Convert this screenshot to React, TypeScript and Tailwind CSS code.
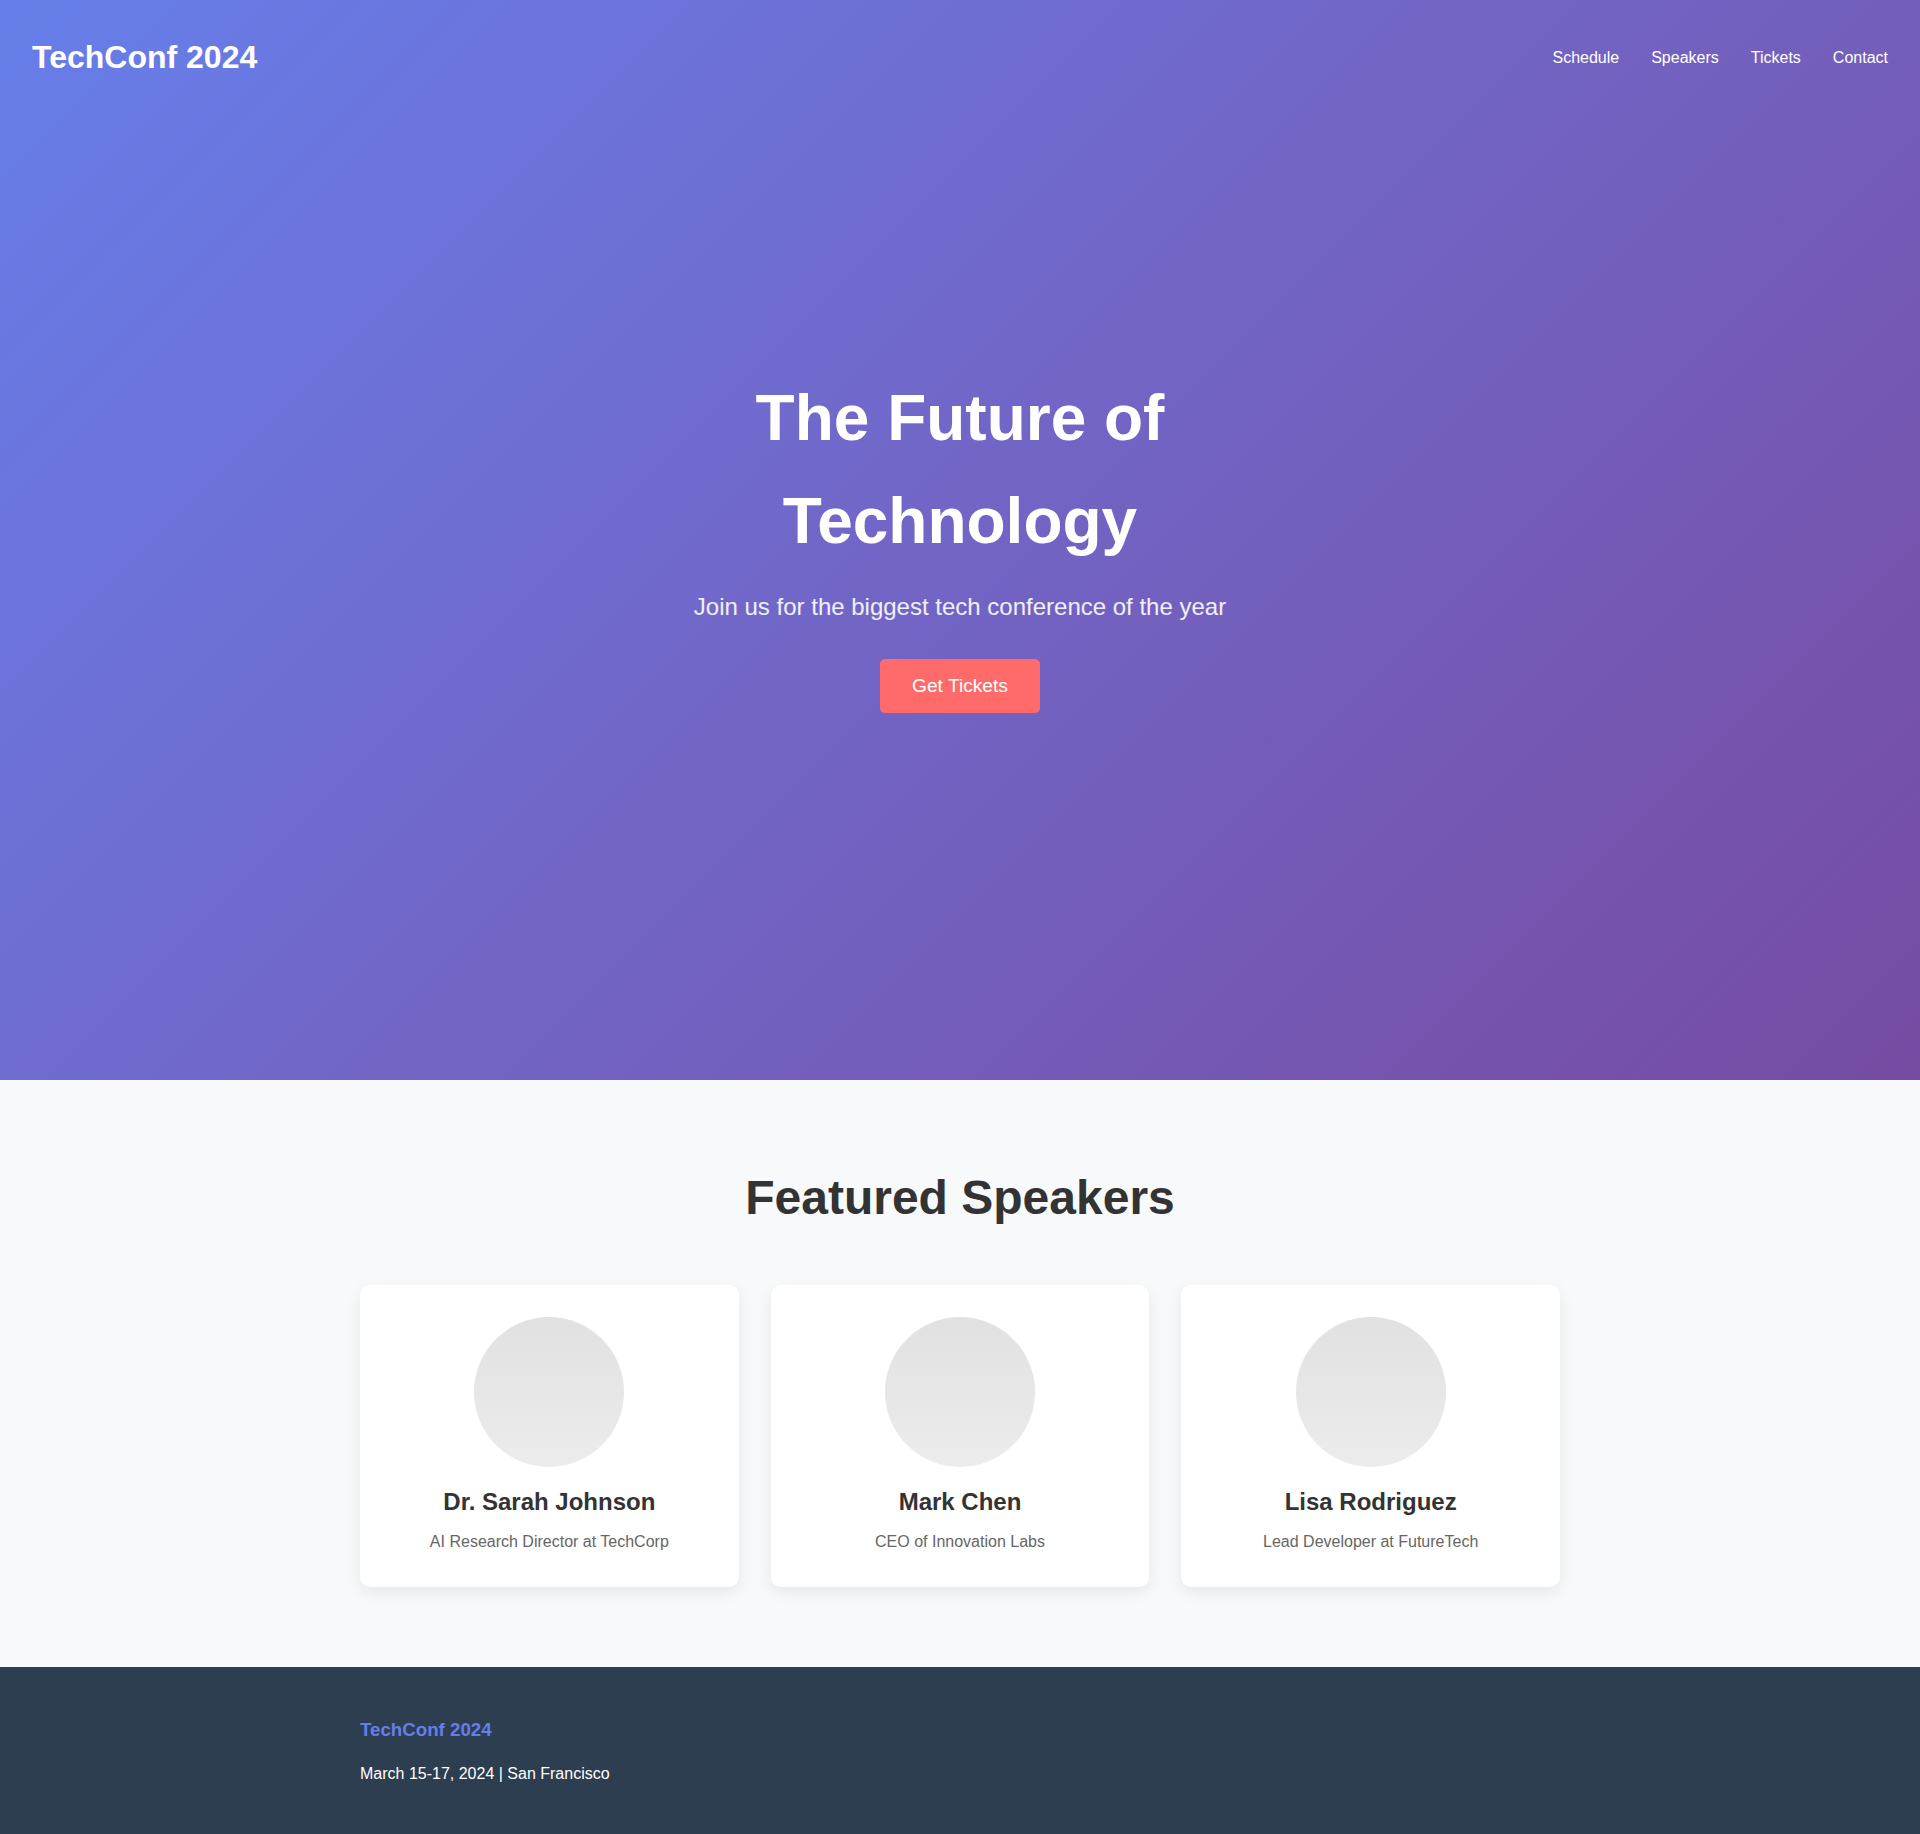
const speakers = [
  { name: 'Dr. Sarah Johnson', role: 'AI Research Director at TechCorp' },
  { name: 'Mark Chen', role: 'CEO of Innovation Labs' },
  { name: 'Lisa Rodriguez', role: 'Lead Developer at FutureTech' },
];

const navLinks = ['Schedule', 'Speakers', 'Tickets', 'Contact'];

function SpeakerCard({ name, role }: { name: string; role: string }) {
  return (
    <div className="flex flex-col items-center rounded-[10px] bg-white p-8 text-center shadow-[0_5px_15px_rgba(0,0,0,0.08)]">
      <div className="mb-4 h-[150px] w-[150px] rounded-full bg-linear-to-b from-[#e1e1e1] to-[#ececec]" />
      <h3 className="mb-2 text-[24px] font-bold text-[#333]">{name}</h3>
      <p className="text-[16px] text-[#666]">{role}</p>
    </div>
  );
}

export default function App() {
  return (
    <div className="font-['Liberation_Sans',Arial,sans-serif] leading-[1.6] text-[#333]">
      <section className="relative flex h-[1080px] items-center justify-center bg-linear-135 from-[#667eea] to-[#764ba2] text-white">
        <header className="absolute inset-x-0 top-0 flex items-center justify-between px-8 pt-[32px] pb-[30px]">
          <div className="text-[32px] font-bold">TechConf 2024</div>
          <nav className="flex gap-8">
            {navLinks.map((link) => (
              <a key={link} href="#" className="text-[16px] text-white">
                {link}
              </a>
            ))}
          </nav>
        </header>

        <div className="flex flex-col items-center text-center">
          <h1 className="mb-4 max-w-[420px] text-[64px] font-bold">The Future of Technology</h1>
          <p className="mb-8 text-[24px] text-white/90">Join us for the biggest tech conference of the year</p>
          <button className="rounded-[5px] bg-[#ff6b6b] px-8 py-4 text-[19.2px] leading-[1.15] text-white">
            Get Tickets
          </button>
        </div>
      </section>

      <section className="bg-[#f8f9fa] py-20">
        <div className="mx-auto max-w-[1200px]">
          <h2 className="mb-12 text-center text-[48px] font-bold text-[#333]">Featured Speakers</h2>
          <div className="grid grid-cols-3 gap-8">
            {speakers.map((s) => (
              <SpeakerCard key={s.name} name={s.name} role={s.role} />
            ))}
          </div>
        </div>
      </section>

      <footer className="bg-[#2c3e50] py-12 text-white">
        <div className="mx-auto max-w-[1200px]">
          <h3 className="mb-4 text-[18.72px] font-bold text-[#667eea]">TechConf 2024</h3>
          <p className="text-[16px]">March 15-17, 2024 | San Francisco</p>
        </div>
      </footer>
    </div>
  );
}
